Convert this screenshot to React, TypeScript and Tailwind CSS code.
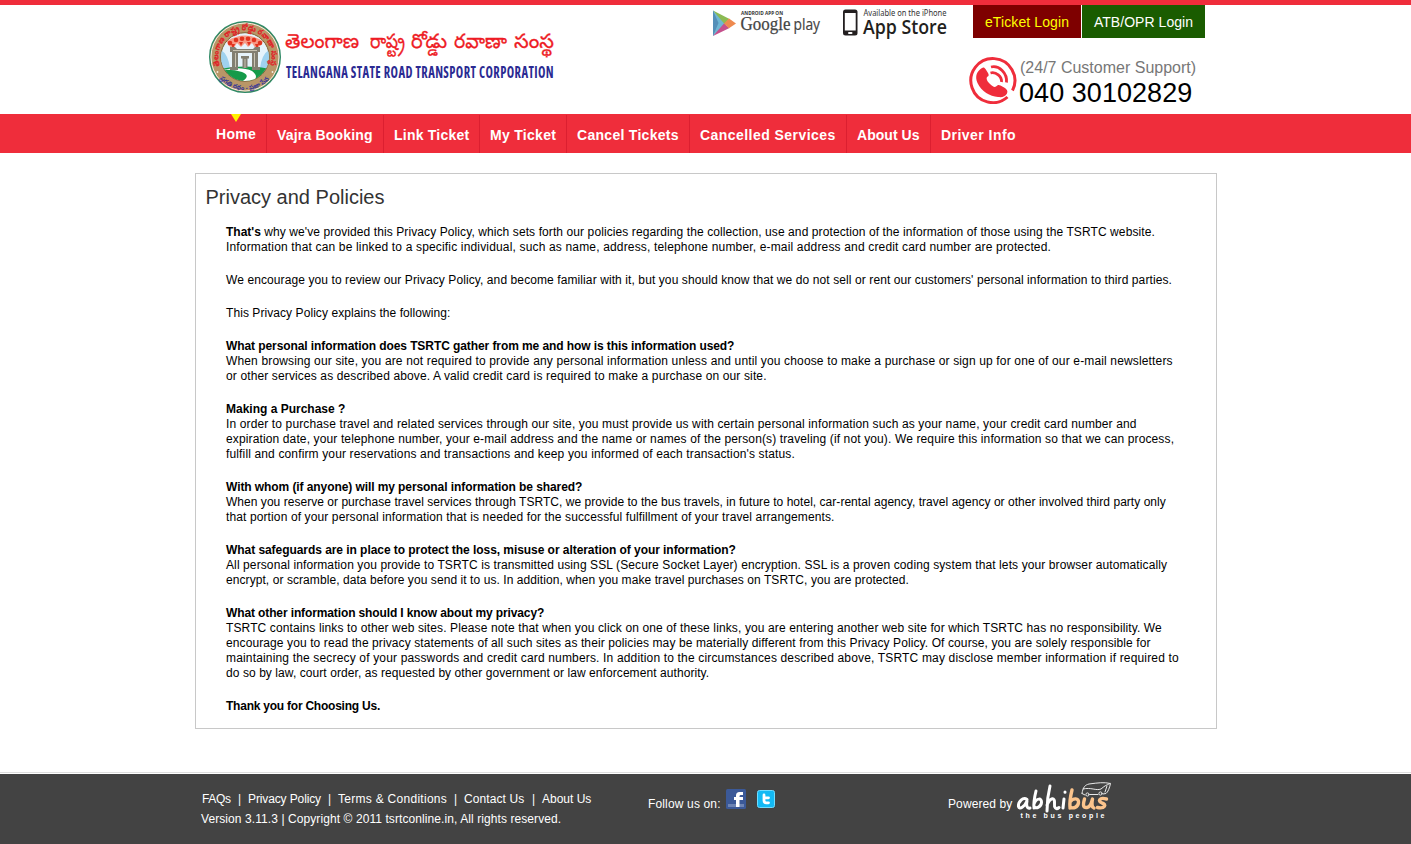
import React from "react";

type Line = { text: string; extra: number };

const nav: { label: string; cls: string }[] = [
  { label: "Vajra Booking", cls: "w-[117px] tracking-[0.19px]" },
  { label: "Link Ticket", cls: "w-[96px] tracking-[0.22px]" },
  { label: "My Ticket", cls: "w-[87px] tracking-[0.29px]" },
  { label: "Cancel Tickets", cls: "w-[123px] tracking-[0.29px]" },
  { label: "Cancelled Services", cls: "w-[157px] tracking-[0.45px]" },
  { label: "About Us", cls: "w-[84px] tracking-[0.05px]" },
  { label: "Driver Info", cls: "w-[100px] tracking-[0.46px]" },
];

const sections: { title?: Line; lines: Line[] }[] = [
  {
    lines: [
      {
        text: "We encourage you to review our Privacy Policy, and become familiar with it, but you should know that we do not sell or rent our customers' personal information to third parties.",
        extra: 17,
      },
    ],
  },
  { lines: [{ text: "This Privacy Policy explains the following:", extra: 3 }] },
  {
    title: { text: "What personal information does TSRTC gather from me and how is this information used?", extra: -7 },
    lines: [
      {
        text: "When browsing our site, you are not required to provide any personal information unless and until you choose to make a purchase or sign up for one of our e-mail newsletters",
        extra: 25.5,
      },
      { text: "or other services as described above. A valid credit card is required to make a purchase on our site.", extra: 13 },
    ],
  },
  {
    title: { text: "Making a Purchase ?", extra: 0 },
    lines: [
      {
        text: "In order to purchase travel and related services through our site, you must provide us with certain personal information such as your name, your credit card number and",
        extra: 21.5,
      },
      {
        text: "expiration date, your telephone number, your e-mail address and the name or names of the person(s) traveling (if not you). We require this information so that we can process,",
        extra: 22.5,
      },
      { text: "fulfill and confirm your reservations and transactions and keep you informed of each transaction's status.", extra: 15 },
    ],
  },
  {
    title: { text: "With whom (if anyone) will my personal information be shared?", extra: -5 },
    lines: [
      {
        text: "When you reserve or purchase travel services through TSRTC, we provide to the bus travels, in future to hotel, car-rental agency, travel agency or other involved third party only",
        extra: 6,
      },
      { text: "that portion of your personal information that is needed for the successful fulfillment of your travel arrangements.", extra: 13.5 },
    ],
  },
  {
    title: { text: "What safeguards are in place to protect the loss, misuse or alteration of your information?", extra: -5 },
    lines: [
      {
        text: "All personal information you provide to TSRTC is transmitted using SSL (Secure Socket Layer) encryption. SSL is a proven coding system that lets your browser automatically",
        extra: 18,
      },
      { text: "encrypt, or scramble, data before you send it to us. In addition, when you make travel purchases on TSRTC, you are protected.", extra: 9 },
    ],
  },
  {
    title: { text: "What other information should I know about my privacy?", extra: -6.5 },
    lines: [
      {
        text: "TSRTC contains links to other web sites. Please note that when you click on one of these links, you are entering another web site for which TSRTC has no responsibility. We",
        extra: 20.5,
      },
      {
        text: "encourage you to read the privacy statements of all such sites as their policies may be materially different from this Privacy Policy. Of course, you are solely responsible for",
        extra: 18,
      },
      {
        text: "maintaining the secrecy of your passwords and credit card numbers. In addition to the circumstances described above, TSRTC may disclose member information if required to",
        extra: 27.5,
      },
      { text: "do so by law, court order, as requested by other government or law enforcement authority.", extra: 6.5 },
    ],
  },
  { title: { text: "Thank you for Choosing Us.", extra: -6 }, lines: [] },
];

const tracking = (l: Line) => ({ letterSpacing: `${l.extra / l.text.length}px` });

function Emblem() {
  return (
    <svg width="74" height="74" viewBox="0 0 74 74" className="shrink-0">
      <defs>
        <path id="ringTop" d="M12 46 A26.600 26.600 0 1 1 62 46" />
        <path id="ringBottom" d="M10 56 A33 33 0 0 0 64 56" />
        <clipPath id="disc">
          <circle cx="37" cy="37" r="24" />
        </clipPath>
      </defs>
      <circle cx="37" cy="37" r="35.300" fill="#b99667" stroke="#2f8a66" strokeWidth="1.400" />
      <circle cx="37" cy="37" r="34" fill="none" stroke="#f3eee2" strokeWidth="1" />
      <circle cx="37" cy="37" r="24.300" fill="#e6f3fb" stroke="#7b6234" strokeWidth="1" />
      <g clipPath="url(#disc)">
        <path d="M13 30 Q20 34 22 48 H12Z M61 30 Q54 34 52 48 H62Z" fill="#9fd2ef" />
        <path d="M12 49 Q37 44 62 49 V64 H12Z" fill="#159a49" />
        <path d="M13 50 Q34 46 44 51 Q52 57 44 62 L33 62 Q44 56 34 52 Q25 49 13 50Z" fill="#fff" />
        <path d="M19 21 Q37 10 55 21 L53 25 L48 29 L44 23 L40 27 L37 23 L33 27 L29 23 L25 29 L20 25Z" fill="#f79a86" />
        <g fill="#e2331f">
          <circle cx="22" cy="23" r="2.300" />
          <circle cx="28" cy="20" r="2.300" />
          <circle cx="34" cy="18.700" r="2.300" />
          <circle cx="40" cy="18.700" r="2.300" />
          <circle cx="46" cy="20" r="2.300" />
          <circle cx="52" cy="23" r="2.300" />
          <path d="M23 24l2 5 2-5z M31 22l2 4 2-4z M39 22l2 4 2-4z M47 24l2 5 2-5z" />
        </g>
        <g fill="#827f72">
          <path d="M22 27h5l2 2h16l2-2h5v5h-2v15h2v3H44V33H30v17H22v-3h2V32h-2z" />
          <path d="M33 36h8v2.500h-1.500V48h-5v-9.500H33z" />
        </g>
        <path d="M27.500 33v14M46.500 33v14M37 39v9M25 30.500h24" stroke="#c9c4b4" strokeWidth="1" />
      </g>
      <circle cx="9.500" cy="52" r="0.900" fill="#f3eee2" />
      <circle cx="64.500" cy="52" r="0.900" fill="#f3eee2" />
      <text fontSize="8" fontWeight="700" fill="#e01f28" stroke="#e01f28" strokeWidth="0.200" className="font-['Noto_Sans_Telugu','Noto_Sans',sans-serif]">
        <textPath href="#ringTop" textLength="101" lengthAdjust="spacingAndGlyphs">తెలంగాణ రాష్ట్ర రోడ్డు రవాణా సంస్థ</textPath>
      </text>
      <text fontSize="6.500" fontWeight="700" fill="#33349a" className="font-['Noto_Sans_Telugu','Noto_Sans',sans-serif]">
        <textPath href="#ringBottom" startOffset="3" textLength="56" lengthAdjust="spacingAndGlyphs">ప్రగతి రథం - ప్రజా సేవ</textPath>
      </text>
    </svg>
  );
}

function Wordmark() {
  return (
    <svg width="276" height="64" viewBox="0 0 276 64" className="shrink-0 overflow-visible">
      <g fill="#ee1c25" stroke="#ee1c25" strokeWidth="0.300" fontSize="20" className="font-['Noto_Sans_Telugu','Noto_Sans',sans-serif]">
        <text x="2" y="22" textLength="74" lengthAdjust="spacingAndGlyphs">తెలంగాణ</text>
        <text x="87" y="22" textLength="35" lengthAdjust="spacingAndGlyphs">రాష్ట్ర</text>
        <text x="128" y="22" textLength="36" lengthAdjust="spacingAndGlyphs">రోడ్డు</text>
        <text x="171" y="22" textLength="53" lengthAdjust="spacingAndGlyphs">రవాణా</text>
        <text x="231" y="22" textLength="40" lengthAdjust="spacingAndGlyphs">సంస్థ</text>
      </g>
      <text x="3" y="52" fontSize="15.500" fontWeight="700" fill="#2a2a92" textLength="268" lengthAdjust="spacingAndGlyphs" className="font-['Open_Sans',sans-serif] tracking-[0.5px] [font-stretch:75%]">
        TELANGANA STATE ROAD TRANSPORT CORPORATION
      </text>
    </svg>
  );
}

function GooglePlay() {
  return (
    <svg width="112" height="33" viewBox="0 0 112 33" className="shrink-0 overflow-visible">
      <path d="M1 5.500 L15 19 L1 31Z" fill="#6fb6d3" />
      <path d="M1 5.500 L17.500 14 L12.500 19Z" fill="#8cba53" />
      <path d="M1 31 L12 18.500 L17.500 23Z" fill="#c5508c" />
      <path d="M17 13.500 L24 18.500 L17 23.300 L12 18.500Z" fill="#ee8a4f" />
      <path d="M1 5.500 L6.500 18 L1 31Z" fill="#548fb8" />
      <text x="29" y="9.500" fontSize="4.600" fontWeight="700" fill="#333" textLength="42" lengthAdjust="spacingAndGlyphs" className="font-['Open_Sans',sans-serif]">ANDROID APP ON</text>
      <text x="28.500" y="25" fontSize="19" fill="#444" stroke="#444" strokeWidth="0.250" textLength="50" lengthAdjust="spacingAndGlyphs" className="font-['Liberation_Serif',serif]">Google</text>
      <text x="81.500" y="25" fontSize="17" fill="#444" stroke="#444" strokeWidth="0.200" textLength="26.500" lengthAdjust="spacingAndGlyphs" className="font-['Open_Sans',sans-serif]">play</text>
    </svg>
  );
}

function AppStore() {
  return (
    <svg width="108" height="33" viewBox="0 0 108 33" className="shrink-0 overflow-visible">
      <rect x="1" y="4.500" width="14.500" height="26" rx="2.500" fill="#231f20" />
      <rect x="2.800" y="8" width="10.900" height="17.500" fill="#fff" />
      <rect x="6" y="27" width="4.500" height="2" rx="1" fill="#fff" />
      <text x="21.500" y="10.700" fontSize="8" fill="#333" textLength="83" lengthAdjust="spacingAndGlyphs" className="font-['Noto_Sans',sans-serif]">Available on the iPhone</text>
      <text x="21" y="28.500" fontSize="19.500" fontWeight="600" fill="#231f20" textLength="84" lengthAdjust="spacingAndGlyphs" className="font-['Open_Sans',sans-serif]">App Store</text>
    </svg>
  );
}

function PhoneIcon() {
  return (
    <svg width="48" height="48" viewBox="0 0 48 48" fill="none" className="shrink-0">
      <path d="M38.500 41 A22 22 0 1 1 43.500 34.500" stroke="#ef2d3b" strokeWidth="3" />
      <path d="M13 12 C8 15 5.500 20 8.500 27 C12.500 35.500 21 40.500 29 41 C33 41.500 36 41 38 37.500 C39 35 38 33.500 36 32 L31.500 29.500 C29.500 28.500 28.500 29 27 30.500 C25.500 31.500 23.500 30.500 20.500 27.500 C18 25 17 22.500 18 21 C20 20 20 19 19 17 L16.500 13 C15.500 11.500 14.500 11 13 12Z" fill="#ef2d3b" />
      <path d="M22 11 C30 9 38.500 17 37.500 26.500 M21.500 17 C27 15.500 33 20.500 32.500 26" stroke="#ef2d3b" strokeWidth="2.800" />
    </svg>
  );
}

function Abhibus() {
  return (
    <svg width="98" height="40" viewBox="0 0 98 40" fill="none" strokeLinecap="round" strokeLinejoin="round" className="shrink-0">
      <g stroke="#fff" strokeWidth="3">
        <path d="M12 17.500 C8 14.500 3 20 3.500 24.500 C4.500 28 9.500 25 12 19 C11 23.500 12 27 15 26" />
        <path d="M21 9 C19.500 15 18.500 21 19 26 M19 22 C21.500 15.500 27 16 26.500 20.500 C26 25 21.500 27 19 25" />
        <path d="M35 4 C33 12 32 20 32 29 M32 23 C35.500 15 40 15 39.500 21 C39 26 41 28 44 25.500" />
        <path d="M49 17 L48 26 M50 10 v.3" />
      </g>
      <g stroke="#fcc48c" strokeWidth="3.400">
        <path d="M57 8 C55.500 14 54.500 20 55 26 M55 20 C58.500 15.500 64 16 63.500 20.500 C63 25.500 58 27 55 25" />
        <path d="M69.500 17 C67.500 24 68.500 26 72 25.500 C76 25 76.500 20 77.500 17 C76.500 22.500 76.500 25 79 26" />
        <path d="M91.500 17 C84 15 82.500 19.500 87 21 C92 22.500 90 27 82.500 25.500" />
      </g>
      <g stroke="#e8e8e8" strokeWidth="1">
        <path d="M67 11.500 C68 5 70 3 74 2 C83 .8 89 0 95.500 1.500 C94.500 6 93 10 91 11.500 L88 12 M83 12.500 L75 12.500 M67 11.500 L70 13 M68 7 C76 5 81 9 86 7 C89 4.500 91 3 95 1.500 M92 4 L90 10" />
        <circle cx="72.500" cy="12.500" r="1.600" />
        <circle cx="85.500" cy="11.500" r="1.600" />
      </g>
      <text x="5.500" y="35.500" fontSize="7" fontWeight="700" fill="#fff" textLength="84" className="font-['Liberation_Sans',sans-serif]">the bus people</text>
    </svg>
  );
}

export default function App() {
  return (
    <div className="flex h-[844px] w-[1411px] flex-col overflow-hidden bg-white font-['Liberation_Sans',Arial,sans-serif] text-black">
      <header className="flex h-[114px] shrink-0 justify-between border-t-[5px] border-[#ef2d3b] pl-[208px] pr-[206px]">
        <div className="flex gap-[1px] pt-[15px]">
          <Emblem />
          <div className="pt-[6px]">
            <Wordmark />
          </div>
        </div>
        <div className="flex flex-col">
          <div className="flex h-[33px]">
            <div className="mr-[18px]"><GooglePlay /></div>
            <div className="mr-[23px]"><AppStore /></div>
            <a className="flex h-[33px] w-[108px] items-center justify-center bg-[#7e0000] pt-px text-[14px] tracking-[0.1px] text-[#ffff00]">eTicket Login</a>
            <a className="ml-px flex h-[33px] w-[123px] items-center justify-center bg-[#1a5c00] pt-px text-[14px] tracking-[0.05px] text-white">ATB/OPR Login</a>
          </div>
          <div className="flex justify-end gap-[3px] pr-[8px] pt-[18px]">
            <PhoneIcon />
            <div className="w-[177px] whitespace-nowrap">
              <div className="pt-[2px] text-[16px] leading-[20px] text-[#777]">(24/7 Customer Support)</div>
              <div className="-ml-px text-[27px] leading-[31px] tracking-[0.05px]">040 30102829</div>
            </div>
          </div>
        </div>
      </header>

      <nav className="flex h-[39px] shrink-0 bg-[#ef2d3b] pl-[206px] text-[14px] font-bold text-white">
        <a className="relative w-[61px] border-r border-[#dc1f30] pl-[10px] leading-[40px] tracking-[0.3px]">
          Home
          <svg width="12" height="8" viewBox="0 0 12 8" className="absolute left-[24px] top-0">
            <path d="M1 0h10L6 8z" fill="#fff200" />
          </svg>
        </a>
        {nav.map((n, i) => (
          <a key={n.label} className={`${n.cls} mt-px whitespace-nowrap pl-[10px] leading-[41px] ${i < nav.length - 1 ? "border-r border-[#dc1f30]" : ""}`}>
            {n.label}
          </a>
        ))}
      </nav>

      <main className="ml-[195px] mt-[20px] h-[556px] w-[1022px] shrink-0 border border-[#c8c8c8]">
        <h1 className="pl-[9.500px] pt-[10px] text-[20px] leading-[26px] text-[#333]">Privacy and Policies</h1>
        <div className="flex flex-col gap-[18px] whitespace-nowrap pl-[30px] pt-[15px] text-[12px] leading-[15px]">
          <div>
            <p className="tracking-[0.095px]"><b className="tracking-normal">That's</b> why we've provided this Privacy Policy, which sets forth our policies regarding the collection, use and protection of the information of those using the TSRTC website.</p>
            <p className="tracking-[0.164px]">Information that can be linked to a specific individual, such as name, address, telephone number, e-mail address and credit card number are protected.</p>
          </div>
          {sections.map((s, i) => (
            <div key={i}>
              {s.title && <h2 className="font-bold" style={tracking(s.title)}>{s.title.text}</h2>}
              {s.lines.map((l) => (
                <p key={l.text} style={tracking(l)}>{l.text}</p>
              ))}
            </div>
          ))}
        </div>
      </main>

      <footer className="mt-[43px] h-[72px] shrink-0 border-t border-[#ddd] pt-px">
        <div className="flex h-[70px] bg-[#434343] pl-[201px] text-[12px] leading-[20px] text-white">
          <div className="w-[447px] whitespace-nowrap pt-[15px]">
            <div className="flex pl-px">
              <span className="w-[36px] tracking-[-0.3px]">FAQs</span>
              <span className="w-[10px]">|</span>
              <span className="w-[80px] tracking-[-0.12px]">Privacy Policy</span>
              <span className="w-[10px]">|</span>
              <span className="w-[116px] tracking-[0.28px]">Terms &amp; Conditions</span>
              <span className="w-[10px]">|</span>
              <span className="w-[68px] tracking-[0.1px]">Contact Us</span>
              <span className="w-[10px]">|</span>
              <span>About Us</span>
            </div>
            <div className="tracking-[0.083px]">Version 3.11.3 | Copyright © 2011 tsrtconline.in, All rights reserved.</div>
          </div>
          <div className="flex w-[300px] pt-[15px]">
            <span className="w-[78px] pt-[5px] tracking-[0.15px]">Follow us on:</span>
            <svg width="20" height="20" viewBox="0 0 20 20">
              <rect width="20" height="20" rx="1.500" fill="#3b5998" />
              <rect x="2" y="15" width="16" height="3" fill="#6d84b4" />
              <path d="M10 18V11H8V8h2V6.500q0-3.500 3.500-3.500H17v3h-2.500q-1 0-1 1.500V8H17v3h-3.500v7z" fill="#fff" />
            </svg>
            <svg width="18" height="18" viewBox="0 0 18 18" className="ml-[11px] mt-px">
              <rect x="0.500" y="0.500" width="17" height="17" rx="2" fill="#13b9f4" stroke="#6fdcff" />
              <path d="M7 5v5.500q0 2.300 2.300 2.300H11.500M7 7.800h4.500" fill="none" stroke="#fff" strokeWidth="2.800" strokeLinecap="round" />
            </svg>
          </div>
          <div className="flex">
            <span className="w-[67px] whitespace-nowrap pt-[20px] tracking-[0.1px]">Powered by</span>
            <div className="pt-[8px]"><Abhibus /></div>
          </div>
        </div>
      </footer>
    </div>
  );
}
